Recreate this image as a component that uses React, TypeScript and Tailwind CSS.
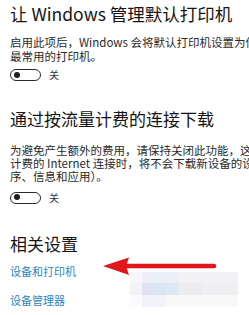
import React from "react";

const font = { fontFamily: '"Noto Sans CJK SC", "Noto Sans", sans-serif' };

function Toggle() {
  return (
    <div className="flex items-center h-[12px]">
      <div className="relative w-[31px] h-[12px] rounded-full border-[1.5px] border-[#2a2a2a] box-border">
        <div className="absolute left-[3px] top-[1.5px] w-[6px] h-[6px] rounded-full bg-[#1e1e1e]" />
      </div>
      <span className="ml-[8px] text-[10px] leading-[12px] text-[#333]">关</span>
    </div>
  );
}

const mosaic: { x: number; y: number; w: number; h: number; c: string }[] = [
  { x: 130, y: 272, w: 12, h: 11, c: "#f7f7fb" },
  { x: 142, y: 272, w: 12, h: 11, c: "#eeeef8" },
  { x: 154, y: 272, w: 24, h: 11, c: "#e9eff8" },
  { x: 178, y: 272, w: 60, h: 11, c: "#f2f2f4" },
  { x: 130, y: 283, w: 12, h: 12, c: "#f3f3f7" },
  { x: 142, y: 283, w: 12, h: 12, c: "#e2e1f4" },
  { x: 154, y: 283, w: 12, h: 12, c: "#d9e6f3" },
  { x: 166, y: 283, w: 12, h: 12, c: "#dce9f5" },
  { x: 178, y: 283, w: 24, h: 12, c: "#ececef" },
  { x: 202, y: 283, w: 36, h: 12, c: "#efeff1" },
  { x: 130, y: 295, w: 12, h: 12, c: "#fbfbfd" },
  { x: 142, y: 295, w: 24, h: 12, c: "#f3f2fb" },
  { x: 166, y: 295, w: 72, h: 12, c: "#f8f8f9" },
];

export default function App() {
  return (
    <div
      className="relative w-[249px] h-[315px] overflow-hidden bg-white pl-[10px] text-[#222]"
      style={font}
    >
      <div className="mt-[3px] h-[22px] text-[17.5px] leading-[22px] whitespace-nowrap text-[#151515]">
        让 Windows 管理默认打印机
      </div>
      <div className="mt-[11px] text-[11.5px] leading-[13.5px] whitespace-nowrap text-[#2a2a2a]">
        <div>启用此项后，Windows 会将默认打印机设置为你的</div>
        <div>最常用的打印机。</div>
      </div>
      <div className="mt-[6px]">
        <Toggle />
      </div>

      <div className="mt-[26.5px] h-[22px] text-[17px] leading-[22px] whitespace-nowrap text-[#151515]">
        通过按流量计费的连接下载
      </div>
      <div className="mt-[14px] text-[11.5px] leading-[13px] whitespace-nowrap text-[#2a2a2a]">
        <div>为避免产生额外的费用，请保持关闭此功能，这样在</div>
        <div>计费的 Internet 连接时，将不会下载新设备的设备软件</div>
        <div>序、信息和应用）。</div>
      </div>
      <div className="mt-[9px]">
        <Toggle />
      </div>

      <div className="mt-[29.5px] h-[22px] text-[17px] leading-[22px] whitespace-nowrap text-[#151515]">
        相关设置
      </div>
      <div className="mt-[9.5px] h-[13px] text-[11px] leading-[13px] whitespace-nowrap text-[#2f86c0]">
        设备和打印机
      </div>
      <div className="mt-[16px] h-[13px] text-[11px] leading-[13px] whitespace-nowrap text-[#2f86c0]">
        设备管理器
      </div>

      {mosaic.map((m, i) => (
        <div
          key={i}
          className="absolute"
          style={{ left: m.x, top: m.y, width: m.w, height: m.h, background: m.c }}
        />
      ))}

      <svg
        className="absolute left-0 top-0"
        width="249"
        height="315"
        viewBox="0 0 249 315"
      >
        <polygon points="103,266 129,257.5 126,266 129,275" fill="#e3161b" />
        <line
          x1="126"
          y1="266"
          x2="214"
          y2="266"
          stroke="#e3161b"
          strokeWidth="4.5"
          strokeLinecap="round"
        />
      </svg>
    </div>
  );
}
